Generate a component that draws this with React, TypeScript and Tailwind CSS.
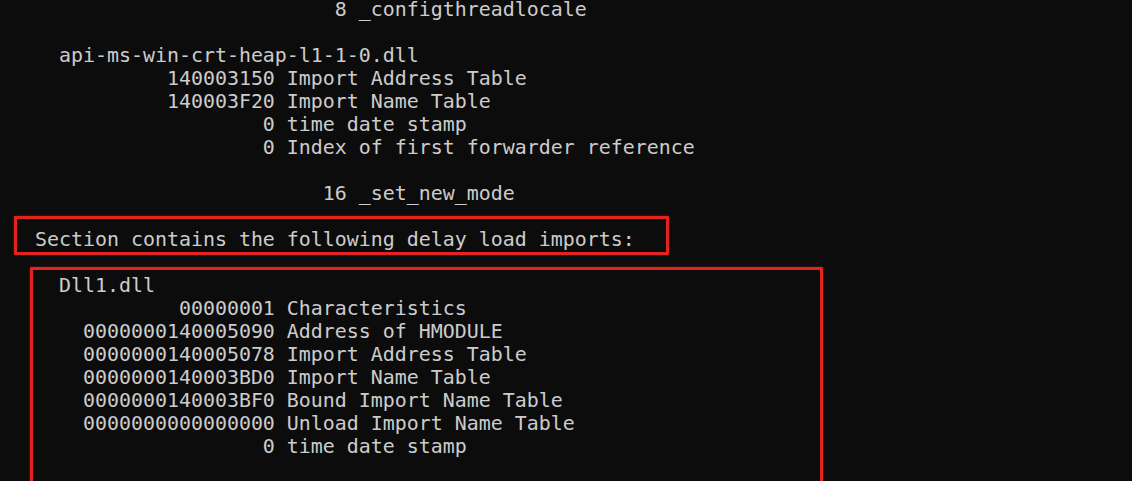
import React from "react";

const lines: string[] = [
  " ".repeat(27) + "8 _configthreadlocale",
  "",
  " ".repeat(4) + "api-ms-win-crt-heap-l1-1-0.dll",
  " ".repeat(13) + "140003150 Import Address Table",
  " ".repeat(13) + "140003F20 Import Name Table",
  " ".repeat(21) + "0 time date stamp",
  " ".repeat(21) + "0 Index of first forwarder reference",
  "",
  " ".repeat(26) + "16 _set_new_mode",
  "",
  " ".repeat(2) + "Section contains the following delay load imports:",
  "",
  " ".repeat(4) + "Dll1.dll",
  " ".repeat(14) + "00000001 Characteristics",
  " ".repeat(6) + "0000000140005090 Address of HMODULE",
  " ".repeat(6) + "0000000140005078 Import Address Table",
  " ".repeat(6) + "0000000140003BD0 Import Name Table",
  " ".repeat(6) + "0000000140003BF0 Bound Import Name Table",
  " ".repeat(6) + "0000000000000000 Unload Import Name Table",
  " ".repeat(21) + "0 time date stamp",
  "",
];

export default function App() {
  return (
    <div className="relative w-[1132px] h-[481px] overflow-hidden bg-[#0c0c0c]">
      <div
        className="pl-[11px] text-[#cccccc] text-[19.93px] leading-[19px]"
        style={{ fontFamily: '"DejaVu Sans Mono", "Liberation Mono", monospace' }}
      >
        {lines.map((l, i) => (
          <div key={i} className="h-[23px] whitespace-pre">
            {l}
          </div>
        ))}
      </div>
      <div className="absolute left-[14px] top-[216px] w-[655px] h-[39px] border-[3px] border-[#e3231d] rounded-[1px] shadow-[0_0_2px_rgba(227,35,29,0.6)]" />
      <div className="absolute left-[30px] top-[267px] w-[793px] h-[240px] border-[3px] border-[#e3231d] rounded-[1px] shadow-[0_0_2px_rgba(227,35,29,0.6)]" />
    </div>
  );
}
